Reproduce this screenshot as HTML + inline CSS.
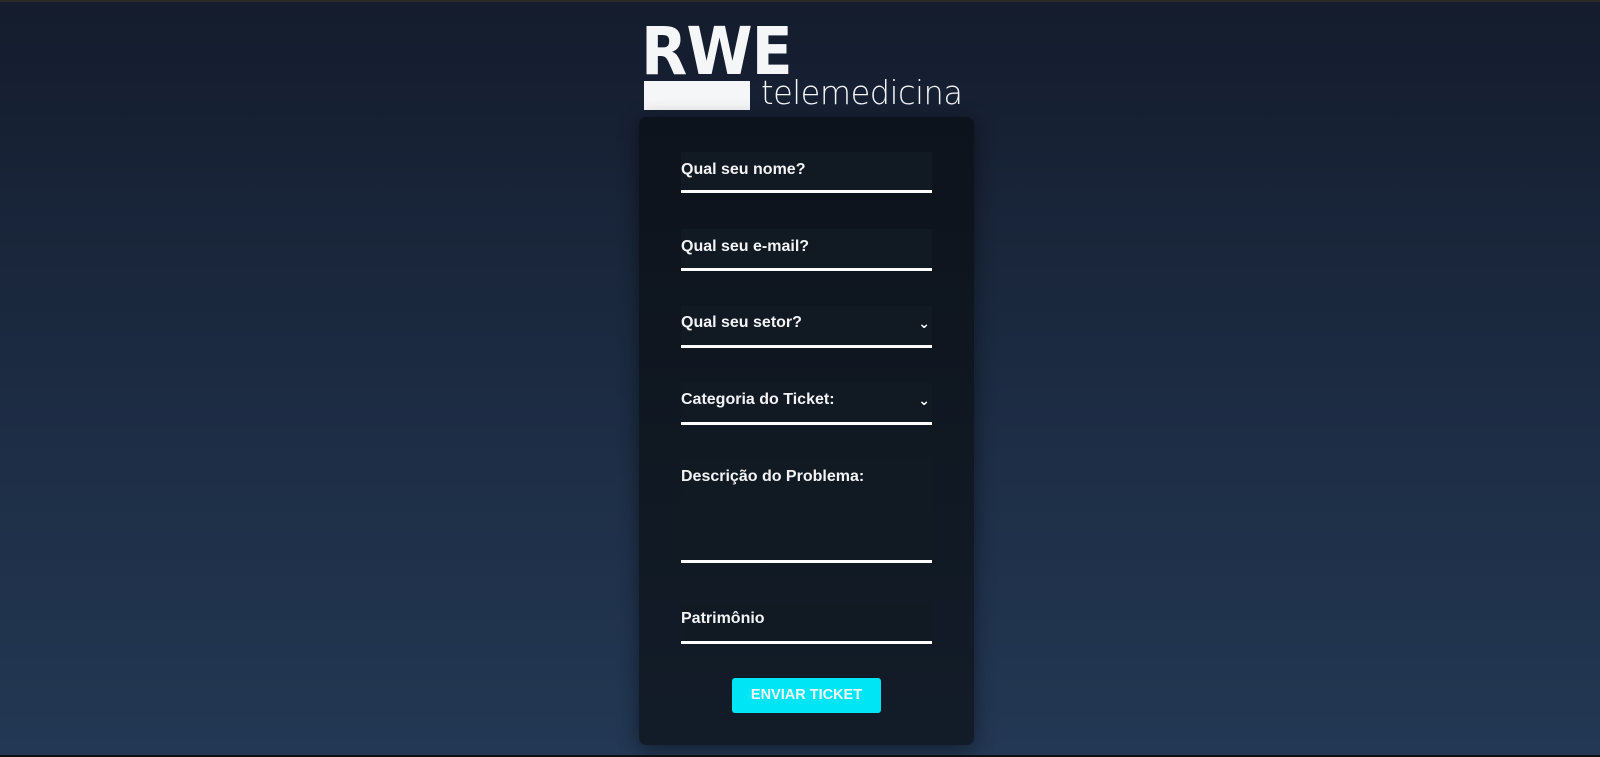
<!DOCTYPE html>
<html><head><meta charset="utf-8"><style>
*{margin:0;padding:0;box-sizing:border-box}
html,body{width:1600px;height:757px;overflow:hidden}
body{background:linear-gradient(#141c2d 0%,#1c2b42 50%,#233854 100%);font-family:"DejaVu Sans","Liberation Sans",sans-serif;position:relative}
.topline{position:absolute;left:0;top:0;width:1600px;height:2px;background:#2b2a28}
.bot{position:absolute;left:0;top:755px;width:1600px;height:2px;background:#0d0f12}
.rwe{position:absolute;left:641px;top:13px;font:bold 66px "DejaVu Sans",sans-serif;color:#f5f6f8;letter-spacing:-1px;transform:scaleX(0.91);transform-origin:left}
.rect{position:absolute;left:644px;top:81px;width:106px;height:29px;background:#f5f6f8}
.tele{position:absolute;left:761px;top:73px;font:300 33px "DejaVu Sans",sans-serif;color:#f5f6f8;transform:scaleX(0.97);transform-origin:left;letter-spacing:-0.5px}
.card{position:absolute;left:639px;top:117px;width:335px;height:628px;border-radius:7px;background:linear-gradient(#0d131c,#121c28);box-shadow:0 4px 20px rgba(0,0,0,.45)}
.f{position:absolute;left:681px;width:251px;background:#111923;border-bottom:3px solid #fff}
.f span{position:absolute;left:0;font:bold 16px "Liberation Sans",sans-serif;color:#f2f3f5}
.chev{position:absolute;right:2px;color:#fff;font-size:14px}
.btn{position:absolute;left:732px;top:678px;width:149px;height:35px;border-radius:3px;background:#00e5f5;color:#f3f8fa;font:bold 14.5px "Liberation Sans",sans-serif;text-align:center;line-height:35px}
</style></head><body>
<div class="topline"></div>
<div class="rwe">RWE</div>
<div class="rect"></div>
<div class="tele">telemedicina</div>
<div class="card"></div>
<div class="f" style="top:152px;height:41px"><span style="top:9px">Qual seu nome?</span></div>
<div class="f" style="top:229px;height:42px"><span style="top:9px">Qual seu e-mail?</span></div>
<div class="f" style="top:306px;height:42px"><span style="top:8px">Qual seu setor?</span><b class="chev" style="top:10px">⌄</b></div>
<div class="f" style="top:383px;height:42px"><span style="top:8px">Categoria do Ticket:</span><b class="chev" style="top:10px">⌄</b></div>
<div class="f" style="top:459px;height:104px"><span style="top:9px">Descrição do Problema:</span></div>
<div class="f" style="top:602px;height:42px"><span style="top:8px">Patrimônio</span></div>
<div class="btn">ENVIAR TICKET</div>
<div class="bot"></div>
</body></html>
